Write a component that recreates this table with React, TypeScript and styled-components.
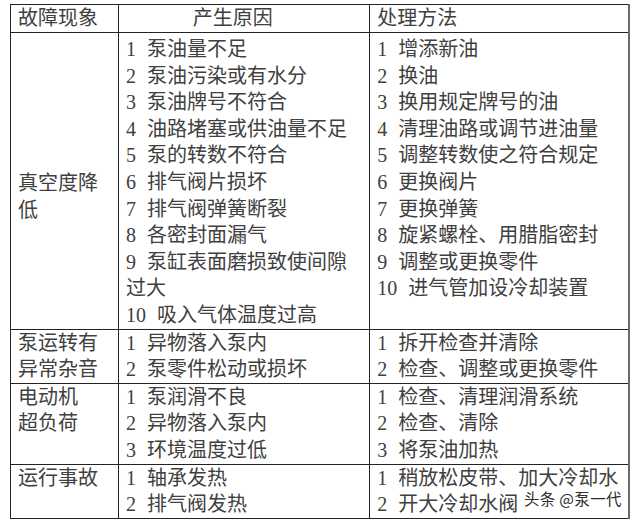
import * as React from 'react';
import styled, { createGlobalStyle } from 'styled-components';

// data
interface IFaultRow {
	readonly symptom: string[];
	readonly causes: string[];
	readonly fixes: string[];
	readonly symptomTop?: number;
	readonly listTop?: number;
}

const rows: IFaultRow[] = [
	{
		symptom: ['真空度降低'],
		symptomTop: 137,
		listTop: 3,
		causes: [
			'泵油量不足',
			'泵油污染或有水分',
			'泵油牌号不符合',
			'油路堵塞或供油量不足',
			'泵的转数不符合',
			'排气阀片损坏',
			'排气阀弹簧断裂',
			'各密封面漏气',
			'泵缸表面磨损致使间隙过大',
			'吸入气体温度过高'
		],
		fixes: [
			'增添新油',
			'换油',
			'换用规定牌号的油',
			'清理油路或调节进油量',
			'调整转数使之符合规定',
			'更换阀片',
			'更换弹簧',
			'旋紧螺栓、用腊脂密封',
			'调整或更换零件',
			'进气管加设冷却装置'
		]
	},
	{
		symptom: ['泵运转有', '异常杂音'],
		causes: ['异物落入泵内', '泵零件松动或损坏'],
		fixes: ['拆开检查并清除', '检查、调整或更换零件']
	},
	{
		symptom: ['电动机', '超负荷'],
		causes: ['泵润滑不良', '异物落入泵内', '环境温度过低'],
		fixes: ['检查、清理润滑系统', '检查、清除', '将泵油加热']
	},
	{
		symptom: ['运行事故'],
		causes: ['轴承发热', '排气阀发热'],
		fixes: ['稍放松皮带、加大冷却水', '开大冷却水阀']
	}
];

export default function App() {
	return (
		<>
			<GlobalStyle />
			<Page>
				<Table>
					<colgroup>
						<col style={{ width: 108 }} />
						<col style={{ width: 251 }} />
						<col style={{ width: 259 }} />
					</colgroup>
					<thead>
						<tr>
							<HeadCell>故障现象</HeadCell>
							<HeadCell center>产生原因</HeadCell>
							<HeadCell>处理方法</HeadCell>
						</tr>
					</thead>
					<tbody>
						{rows.map((row, i) => (
							<tr key={i}>
								<Cell top={row.symptomTop}>
									{row.symptom.map(s => (
										<Line key={s}>{s}</Line>
									))}
								</Cell>
								<Cell top={row.listTop}>
									<NumberedList items={row.causes} />
								</Cell>
								<Cell top={row.listTop}>
									<NumberedList items={row.fixes} />
								</Cell>
							</tr>
						))}
					</tbody>
				</Table>
				<Watermark>头条 @泵一代</Watermark>
			</Page>
		</>
	);
}

const NumberedList: React.FC<{ items: string[] }> = ({ items }) => (
	<>
		{items.map((text, i) => (
			<Line key={text}>
				<Num>{i + 1}</Num>
				{text}
			</Line>
		))}
	</>
);

// css
const GlobalStyle = createGlobalStyle`
	html, body {
		margin: 0;
		padding: 0;
		background: #ffffff;
	}
`;

const Page = styled.div`
	position: relative;
	width: 640px;
	height: 520px;
	padding: 4px 0 0 10px;
	box-sizing: border-box;
	background: #ffffff;
	font-family: 'Liberation Serif', 'Noto Sans CJK SC', serif;
	font-size: 20px;
	color: #404040;
`;

const Table = styled.table`
	width: 620px;
	border-collapse: collapse;
	table-layout: fixed;
	border-right: 2px solid #6a6a6a;

	td,
	th {
		border: 1px solid #232323;
	}
`;

const HeadCell = styled.th<{ center?: boolean }>`
	height: 27px;
	padding: ${p => (p.center ? '0 30px 0 7px' : '0 7px')};
	text-align: ${p => (p.center ? 'center' : 'left')};
	font-weight: normal;
	line-height: 27px;
	vertical-align: middle;
`;

const Cell = styled.td<{ top?: number }>`
	padding: ${p => `${p.top || 0}px 7px 0`};
	vertical-align: top;
	line-height: 26.6px;
	word-break: break-all;
`;

const Line = styled.div`
	white-space: normal;
`;

const Num = styled.span`
	display: inline-block;
	margin-right: 11px;
`;

const Watermark = styled.div`
	position: absolute;
	left: 524px;
	top: 489px;
	font-family: 'Noto Sans CJK SC', sans-serif;
	font-size: 15.5px;
	line-height: 18px;
	color: #2e2e2e;
	letter-spacing: 0.3px;
	text-shadow: 0 0 2px #ffffff, 0 0 2px #ffffff;
`;
